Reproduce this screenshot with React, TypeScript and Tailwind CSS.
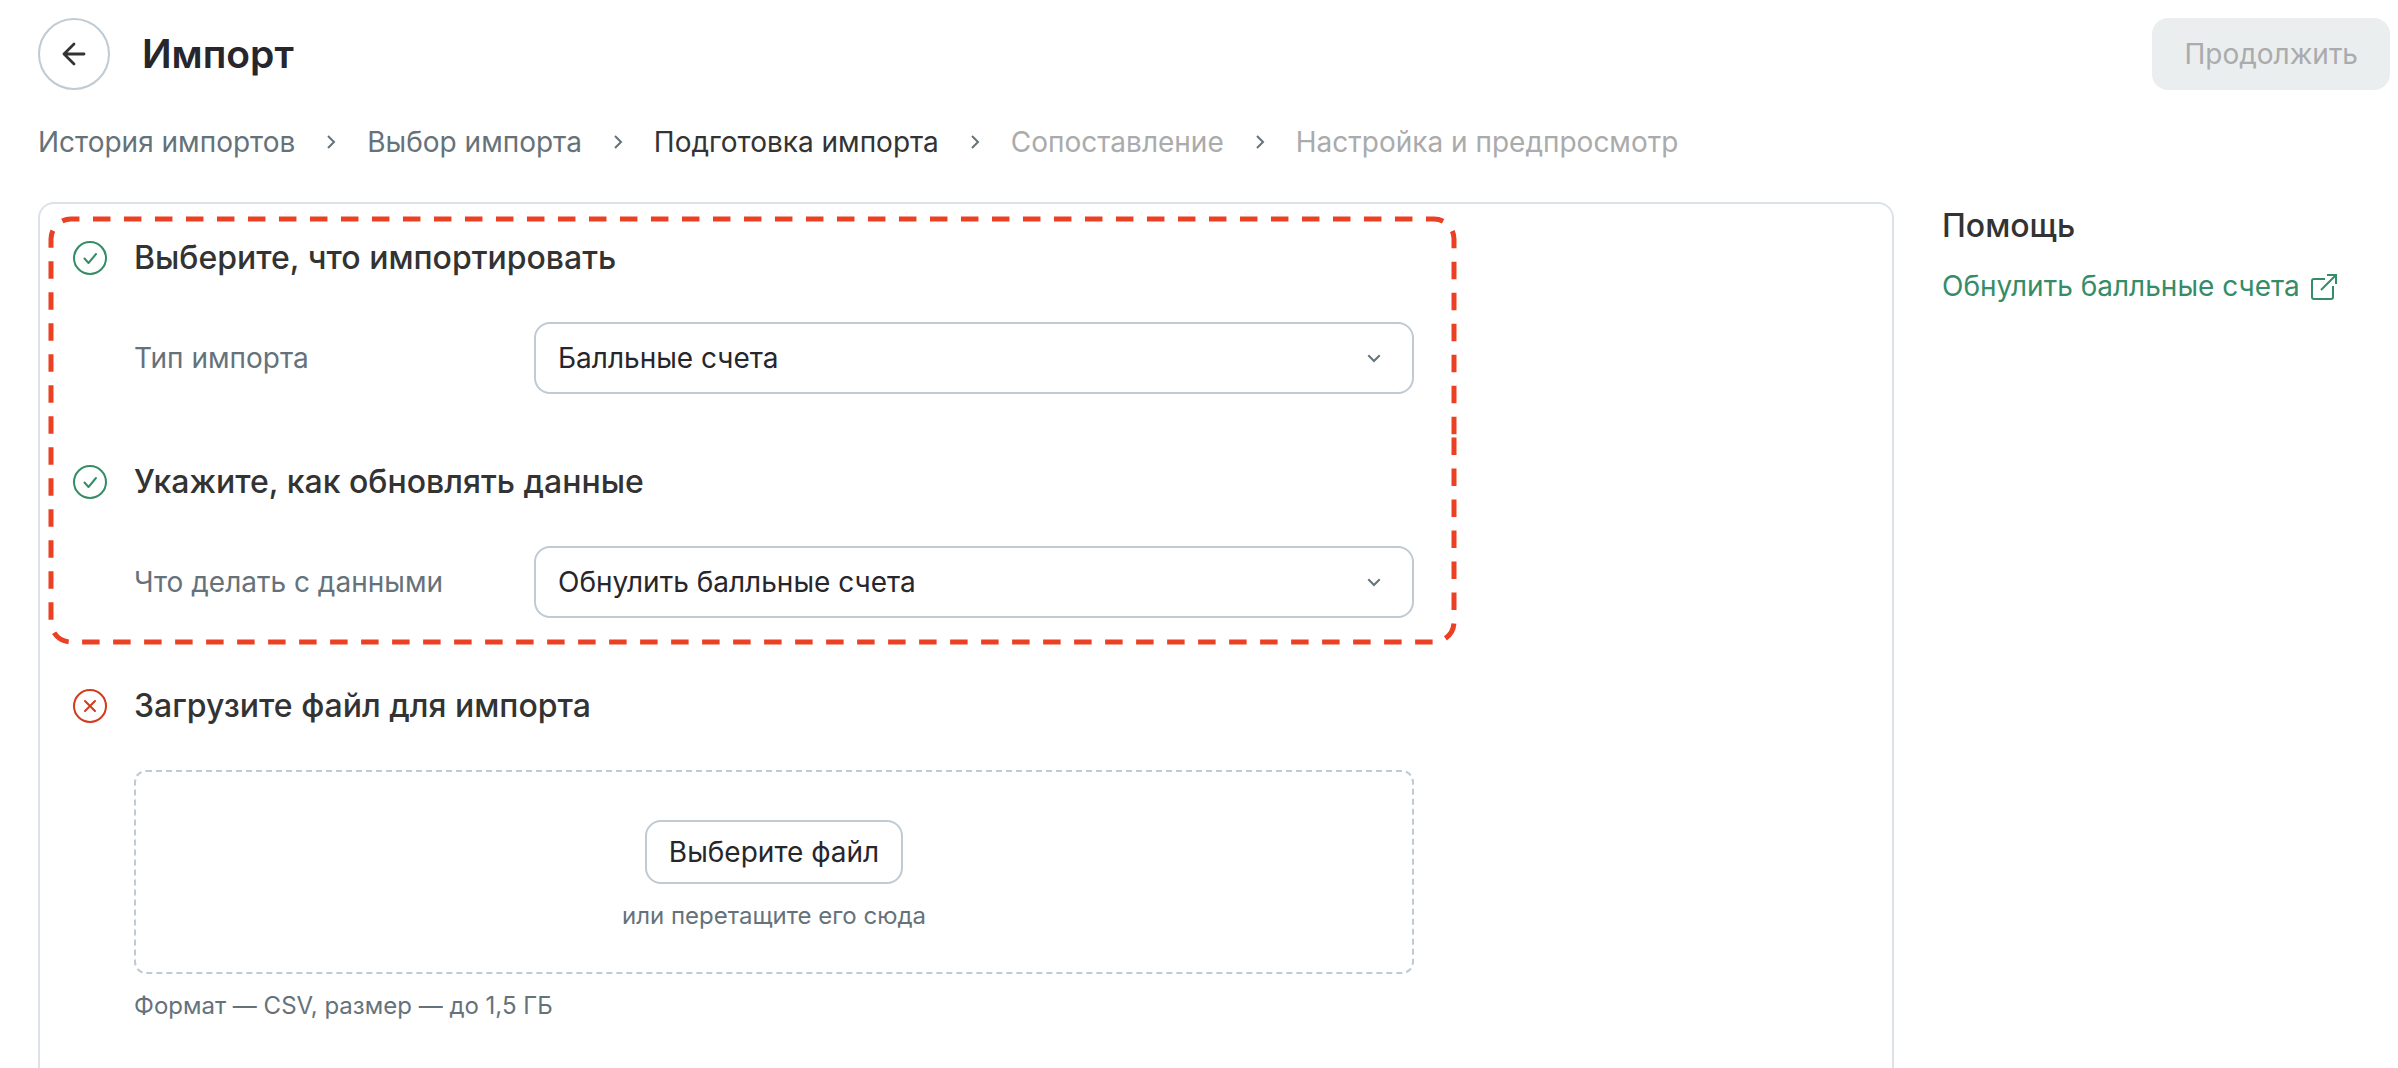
import { Fragment, ReactNode, useState } from "react";

const steps = [
  { label: "История импортов", status: "done" },
  { label: "Выбор импорта", status: "done" },
  { label: "Подготовка импорта", status: "current" },
  { label: "Сопоставление", status: "next" },
  { label: "Настройка и предпросмотр", status: "next" },
];

const StatusIcon = ({ ok }: { ok: boolean }) => (
  <svg
    className={ok ? "size-10 shrink-0 text-[#358c67]" : "size-10 shrink-0 text-[#d23b1c]"}
    viewBox="0 0 40 40"
    fill="none"
    stroke="currentColor"
    strokeWidth="2"
    strokeLinecap="round"
    strokeLinejoin="round"
    aria-hidden="true"
  >
    <circle cx="20" cy="20" r="16" />
    {ok ? <path d="M14.5 20.5l4 4.5 7.5-9" /> : <path d="M15 15l10 10M25 15l-10 10" />}
  </svg>
);

const Section = ({ title, ok, children }: { title: string; ok: boolean; children: ReactNode }) => (
  <section>
    <div className="flex items-center gap-6">
      <StatusIcon ok={ok} />
      <h2 className="text-[32px] leading-10 font-medium text-[#333333]">{title}</h2>
    </div>
    <div className="mt-11 ml-16">{children}</div>
  </section>
);

type SelectFieldProps = {
  id: string;
  label: string;
  options: string[];
};

const SelectField = ({ id, label, options }: SelectFieldProps) => {
  const [value, setValue] = useState(options[0]);

  return (
    <div className="flex items-center">
      <label htmlFor={id} className="w-[400px] shrink-0 text-[28px] leading-10 text-[#66727a]">
        {label}
      </label>
      <div className="relative flex-1">
        <select
          id={id}
          value={value}
          onChange={(e) => setValue(e.target.value)}
          className="h-[72px] w-full appearance-none rounded-2xl border-2 border-[#bfcad3] bg-white px-[22px] text-[28px] text-[#26262c]"
        >
          {options.map((option) => (
            <option key={option}>{option}</option>
          ))}
        </select>
        <svg
          className="pointer-events-none absolute top-6 right-7 size-6 text-[#66727a]"
          viewBox="0 0 24 24"
          fill="none"
          stroke="currentColor"
          strokeWidth="2"
          aria-hidden="true"
        >
          <path d="M6.3 9.3l5.7 5.7 5.7-5.7" />
        </svg>
      </div>
    </div>
  );
};

const App = () => {
  return (
    <div className="h-screen overflow-hidden bg-white pt-[18px] pr-2 pl-[38px] font-['Inter',sans-serif]">
      <header className="flex items-center justify-between">
        <div className="flex items-center gap-8">
          <button
            type="button"
            aria-label="Назад"
            className="flex size-[72px] items-center justify-center rounded-full border-2 border-[#bfcad3] text-[#333333]"
          >
            <svg
              className="size-8"
              viewBox="0 0 32 32"
              fill="none"
              stroke="currentColor"
              strokeWidth="2.8"
              strokeLinecap="round"
              strokeLinejoin="round"
              aria-hidden="true"
            >
              <path d="M26 16H6M16 6L6 16l10 10" />
            </svg>
          </button>
          <h1 className="text-[39px] leading-12 font-semibold text-[#26262c]">Импорт</h1>
        </div>
        <button
          type="button"
          disabled
          className="h-[72px] rounded-2xl bg-[#eaeeef] px-8 text-[28px] text-[#aaabac]"
        >
          Продолжить
        </button>
      </header>

      <nav className="mt-8 flex items-center gap-6 text-[28px] leading-10">
        {steps.map((step, index) => (
          <Fragment key={step.label}>
            {index > 0 && (
              <svg
                className="size-6 text-[#66727a]"
                viewBox="0 0 24 24"
                fill="none"
                stroke="currentColor"
                strokeWidth="2"
                aria-hidden="true"
              >
                <path d="M9 6l6 6-6 6" />
              </svg>
            )}
            {step.status === "done" && (
              <a href="#" className="text-[#66727a]">
                {step.label}
              </a>
            )}
            {step.status === "current" && <span className="text-[#333333]">{step.label}</span>}
            {step.status === "next" && <span className="text-[#aaabac]">{step.label}</span>}
          </Fragment>
        ))}
      </nav>

      <div className="mt-10 flex items-start gap-12">
        <main className="relative flex-1 rounded-2xl border-2 border-[#dce2e8] pt-[34px] pb-24 pl-[30px]">
          <div className="flex max-w-[1344px] flex-col gap-[68px]">
            <Section title="Выберите, что импортировать" ok>
              <SelectField id="import-type" label="Тип импорта" options={["Балльные счета"]} />
            </Section>
            <Section title="Укажите, как обновлять данные" ok>
              <SelectField
                id="import-action"
                label="Что делать с данными"
                options={["Обнулить балльные счета"]}
              />
            </Section>
            <Section title="Загрузите файл для импорта" ok={false}>
              <div className="flex flex-col items-center rounded-xl border-2 border-dashed border-[#bfcad3] pt-12 pb-10">
                <button
                  type="button"
                  className="h-16 rounded-2xl border-2 border-[#bfcad3] px-[22px] text-[28px] text-[#26262c]"
                >
                  Выберите файл
                </button>
                <p className="mt-4 text-2xl text-[#66727a]">или перетащите его сюда</p>
              </div>
              <p className="mt-4 text-2xl text-[#66727a]">Формат — CSV, размер — до 1,5 ГБ</p>
            </Section>
          </div>

          {/* highlight around the first two sections */}
          <svg
            className="pointer-events-none absolute top-3 left-2 h-[431px] w-[1411px]"
            viewBox="0 0 1411 431"
            fill="none"
            stroke="#eb4024"
            strokeWidth="5"
            strokeDasharray="17.5 13.5"
            aria-hidden="true"
          >
            <path d="M1406 221.6V406a20 20 0 0 1-20 20H23a20 20 0 0 1-20-20V23a20 20 0 0 1 20-20H1386a20 20 0 0 1 20 20Z" />
          </svg>
        </main>

        <aside className="w-[448px]">
          <h2 className="text-[32px] leading-12 font-medium text-[#333333]">Помощь</h2>
          <a
            href="#"
            className="mt-4 flex items-center gap-2 text-[28px] leading-10 whitespace-nowrap text-[#358c67]"
          >
            Обнулить балльные счета
            <svg
              className="size-8 shrink-0"
              viewBox="0 0 32 32"
              fill="none"
              stroke="currentColor"
              strokeWidth="2"
              aria-hidden="true"
            >
              <path d="M17 9H6a2 2 0 0 0-2 2v16a2 2 0 0 0 2 2h17a2 2 0 0 0 2-2V16" />
              <path d="M19 5h9v9M28 5L13 20" />
            </svg>
          </a>
        </aside>
      </div>
    </div>
  );
};

export default App;
